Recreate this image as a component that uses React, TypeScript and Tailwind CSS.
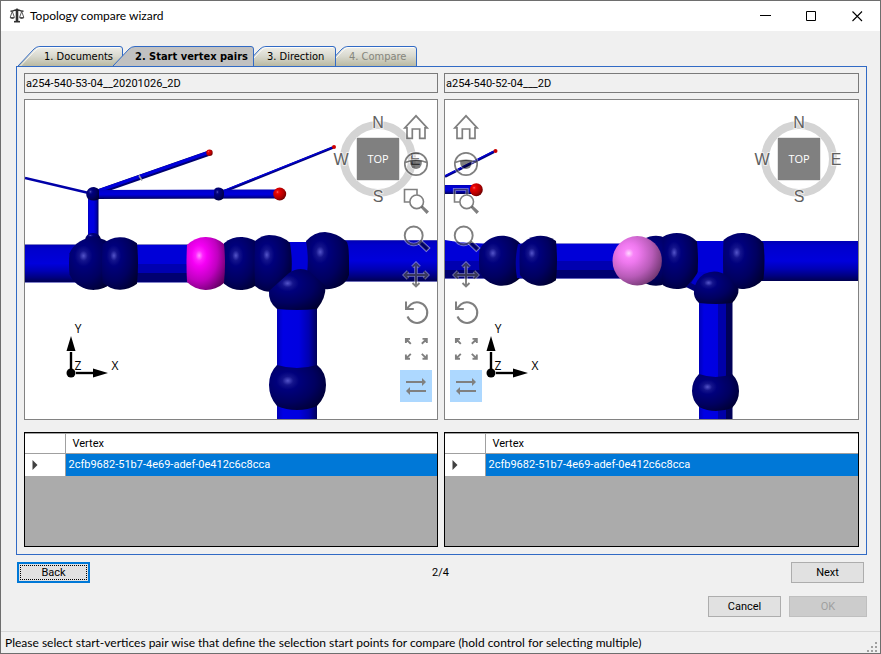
import React from "react";

const UI = "font-[Lato,'Open_Sans',sans-serif]";
const COMPACT = "font-[Roboto,'Liberation_Sans',sans-serif]";

/* ---------- Title bar ---------- */

function ScalesIcon() {
  return (
    <svg width="16" height="16" viewBox="0 0 16 16" aria-hidden="true" fill="none" stroke="#303030">
      <path d="M8 1.5v12" strokeWidth="2.6" />
      <path d="M5 13.7h6" strokeWidth="1.6" />
      <path d="M1.5 3.2Q4.5 3.2 6 2.2h4Q11.5 3.2 14.5 3.2" strokeWidth="1.4" />
      <path d="M3.3 3.5L1.3 9M3.3 3.5L5.3 9M12.7 3.5L10.7 9M12.7 3.5L14.7 9" strokeWidth=".8" />
      <path d="M.6 9h5.4Q5.5 11 3.3 11T.6 9zM10 9h5.4Q15 11 12.7 11T10 9z" fill="#505050" stroke="none" />
      <circle cx="8" cy="1.8" r="1.4" fill="#303030" stroke="none" />
    </svg>
  );
}

function TitleBar() {
  const control = "flex h-[30px] w-[46px] items-center justify-center";
  return (
    <header className="flex h-[30px] shrink-0 items-center bg-white pl-2">
      <ScalesIcon />
      <h1 className={`ml-[5px] flex-1 text-[12px] leading-4 ${UI}`}>Topology compare wizard</h1>
      <button aria-label="Minimize" className={control}>
        <svg width="11" height="11" viewBox="0 0 11 11"><path d="M0 4.5h11" stroke="#000" /></svg>
      </button>
      <button aria-label="Maximize" className={control}>
        <svg width="11" height="11" viewBox="0 0 11 11"><path d="M.5.5h9v9H.5z" fill="none" stroke="#000" /></svg>
      </button>
      <button aria-label="Close" className={control}>
        <svg width="11" height="11" viewBox="0 0 11 11"><path d="M.5.5l9.5 9.5M10 .5L.5 10" stroke="#000" strokeWidth="1.1" /></svg>
      </button>
    </header>
  );
}

/* ---------- Tabs ---------- */

type TabProps = { label: string; width: number; active?: boolean; disabled?: boolean; className: string };

function Tab({ label, width: w, active, disabled, className }: TabProps) {
  const edge = `M0 20L16 3Q18.5 .5 22 .5H${w - 3}Q${w - 0.5} .5 ${w - 0.5} 3V20`;
  return (
    <button
      role="tab"
      aria-selected={!!active}
      disabled={disabled}
      className={`relative h-5 shrink-0 whitespace-nowrap pt-0.5 text-left text-[11px] leading-[18px] font-['DejaVu_Sans_Condensed','DejaVu_Sans',sans-serif] ${className}`}
    >
      <svg className="absolute inset-0 h-full w-full" viewBox={`0 0 ${w} 20`} preserveAspectRatio="none" aria-hidden="true">
        <defs>
          <linearGradient id="tabFill" x2="0" y2="1">
            <stop offset="0" stopColor="#efefea" />
            <stop offset=".5" stopColor="#d8d8ce" />
            <stop offset="1" stopColor="#b9b9a2" />
          </linearGradient>
        </defs>
        <path d={edge} fill={active ? "#c1c1c1" : "url(#tabFill)"} stroke="#316ac5" />
        {!active && <path d={`M2.5 20L18 3.5Q20 1.5 22 1.5H${w - 3}`} fill="none" stroke="#fff" strokeOpacity=".8" />}
      </svg>
      <span className="relative">{label}</span>
    </button>
  );
}

function Tabs() {
  return (
    <div role="tablist" className="flex pl-0.5">
      <Tab label="1. Documents" width={105} className="z-10 w-[105px] pl-[26px]" />
      <Tab label="2. Start vertex pairs" width={141} active className="z-30 -ml-2.5 w-[141px] pl-[22px] font-bold" />
      <Tab label="3. Direction" width={92} className="z-20 -ml-2.5 w-[92px] pl-[23px]" />
      <Tab label="4. Compare" width={91} disabled className="z-10 -ml-2.5 w-[91px] pl-[23px] text-[#85857c]" />
    </div>
  );
}

/* ---------- Viewport overlays ---------- */

const TOOLS: { name: string; line: string; width: number; solid?: string }[] = [
  { name: "Home", width: 1.7, line: "M7 16.8H4.8L16 4.8L27.2 16.8H25V27.3H19.7V18H12.3V27.3H7Z" },
  {
    name: "Visibility",
    width: 1.7,
    line: "M16 4.8A11.2 11.2 0 1 1 16 27.2A11.2 11.2 0 1 1 16 4.8M5.2 14.5Q16 10 26.8 14.5",
    solid: "M10.2 13Q16 11 21.8 13V15A5.8 6 0 0 1 10.2 15Z",
  },
  {
    name: "Zoom window",
    width: 1.6,
    line: "M10 17H4.5V4.5H17V9.5M16.7 10A6.8 6.8 0 1 1 16.7 23.6A6.8 6.8 0 1 1 16.7 10",
    solid: "M20.8 22.8L22.8 20.8L29 26.5L26.6 29Z",
  },
  {
    name: "Zoom",
    width: 1.9,
    line: "M13.7 4.5A9 9 0 1 1 13.7 22.5A9 9 0 1 1 13.7 4.5",
    solid: "M18.6 21.8L21.6 18.8L29.5 26L26.3 29.2Z",
  },
  {
    name: "Pan",
    width: 1.9,
    line: "M16 4.5V27.5M4.5 16H27.5M12.5 8L16 4.5L19.5 8M12.5 24L16 27.5L19.5 24M8 12.5L4.5 16L8 19.5M24 12.5L27.5 16L24 19.5",
  },
  { name: "Rotate", width: 2, line: "M6.8 12.6L11 8.2A10.3 10.3 0 1 1 7.5 20.5M6 5.5V13H13.8" },
  {
    name: "Fit to view",
    width: 1.9,
    line: "M5.9 10V5.9H10M6 6L10.8 10.8M22.5 5.9H26.8V10M26.7 6L21.8 10.8M5.9 21.5V25.8H10M6 25.7L10.8 20.8M22.5 25.8H26.8V21.5M26.7 25.7L21.8 20.8",
  },
  {
    name: "Synchronize views",
    width: 2,
    line: "M6 12H23M26 21H9",
    solid: "M22 8L26 12L22 16ZM10 17L6 21L10 25Z",
  },
];

function Toolbar({ side }: { side: "left" | "right" }) {
  return (
    <div role="toolbar" className={`absolute top-[11px] flex flex-col gap-[5px] ${side === "left" ? "left-[5px]" : "right-[5px]"}`}>
      {TOOLS.map((t, i) => (
        <button key={t.name} aria-label={t.name} className={`h-8 w-8 ${i === TOOLS.length - 1 ? "bg-[#add8ff]" : ""}`}>
          <svg width="32" height="32" viewBox="0 0 32 32" fill="none">
            {i < 7 && <path d={t.line} stroke="#fff" strokeOpacity=".45" strokeWidth={t.width + 1.6} />}
            {i < 7 && t.solid && <path d={t.solid} stroke="#fff" strokeOpacity=".5" strokeWidth="1.5" />}
            <path d={t.line} stroke={i < 7 ? "#000" : "#808080"} strokeOpacity={i < 7 ? 0.5 : 1} strokeWidth={t.width} />
            {t.solid && <path d={t.solid} fill={i < 7 ? "#000" : "#808080"} fillOpacity={i < 7 ? 0.5 : 1} />}
          </svg>
        </button>
      ))}
    </div>
  );
}

function Compass() {
  return (
    <svg className="absolute top-[10px] right-[13px]" width="92" height="98" viewBox="0 0 92 98" textAnchor="middle">
      <circle cx="46" cy="49" r="34" fill="none" stroke="#d4d4d4" strokeWidth="8" />
      <rect x="24.5" y="27.5" width="43" height="43" fill="#808080" stroke="#e4e4e4" />
      <g fontFamily="Liberation Sans, Arial, sans-serif" fontSize="16" fill="#606060" stroke="#fff" strokeOpacity=".6" strokeWidth="2" paintOrder="stroke">
        <text x="46" y="18">N</text>
        <text x="9" y="55">W</text>
        <text x="83" y="55">E</text>
        <text x="46" y="92">S</text>
      </g>
      <text x="46" y="53" fontFamily="Open Sans, sans-serif" fontSize="11" fill="#fff">TOP</text>
    </svg>
  );
}

/* ---------- 3D scenes ---------- */

function Paints({ id }: { id: string }) {
  const balls: [string, string[]][] = [
    ["navy", ["#5454c8", "#14148c", "#00007c", "#000060", "#00002c"]],
    ["magenta", ["#ff90ff", "#ff20ff", "#f400f4", "#c000c0", "#5c005c"]],
    ["pink", ["#ffd8ff", "#f884f8", "#ee78ee", "#b85cb8", "#5c2c5c"]],
    ["red", ["#ff7070", "#f01010", "#e00000", "#b00000", "#500000"]],
  ];
  return (
    <defs>
      {balls.map(([name, c]) => (
        <radialGradient key={name} id={`${id}-${name}`} cx=".33" cy=".35" r=".8">
          <stop offset="0" stopColor={c[0]} />
          <stop offset=".12" stopColor={c[1]} />
          <stop offset=".25" stopColor={c[2]} />
          <stop offset=".6" stopColor={c[3]} />
          <stop offset="1" stopColor={c[4]} />
        </radialGradient>
      ))}
      <linearGradient id={`${id}-tube`} x2="0" y2="1">
        <stop offset="0" stopColor="#0000b4" />
        <stop offset=".12" stopColor="#0000cc" />
        <stop offset=".5" stopColor="#0000dc" />
        <stop offset=".7" stopColor="#0000b4" />
        <stop offset=".87" stopColor="#000080" />
        <stop offset="1" stopColor="#000050" />
      </linearGradient>
      <linearGradient id={`${id}-post`}>
        <stop offset="0" stopColor="#0000b8" />
        <stop offset=".15" stopColor="#0000e4" />
        <stop offset=".55" stopColor="#0000e0" />
        <stop offset=".8" stopColor="#0000b0" />
        <stop offset="1" stopColor="#000058" />
      </linearGradient>
    </defs>
  );
}

/** A sphere cut by vertical planes at `l` and `r`, where neighbouring solids meet it. */
function ball(cx: number, cy: number, rad: number, l: number, r: number) {
  const a = Math.sqrt(Math.max(0, rad * rad - (l - cx) ** 2));
  const b = Math.sqrt(Math.max(0, rad * rad - (r - cx) ** 2));
  return `M${l} ${cy - a}A${rad} ${rad} 0 0 1 ${r} ${cy - b}Q${r + 2} ${cy} ${r} ${cy + b}A${rad} ${rad} 0 0 1 ${l} ${cy + a}Q${l - 1} ${cy} ${l} ${cy - a}Z`;
}

function Axes({ x, y }: { x: number; y: number }) {
  return (
    <g transform={`translate(${x} ${y})`}>
      <path d="M0 0V-21M5 0H22" stroke="#a0a0a0" strokeWidth="3" />
      <path d="M0 0V-21M5 0H22" stroke="#000" strokeWidth="2" />
      <path d="M0 -37L4.5 -22H-4.5ZM37 0L22 4.5V-4.5Z" />
      <circle r="4.5" />
      <g fontFamily="Open Sans, sans-serif" fontSize="12" textAnchor="middle">
        <text x="7" y="-40">Y</text>
        <text x="44" y="-3">X</text>
        <text x="7" y="-3">Z</text>
      </g>
    </g>
  );
}

function LeftScene() {
  const u = (n: string) => `url(#a-${n})`;
  return (
    <svg className="absolute inset-0 h-full w-full" viewBox="25 100 412 319" preserveAspectRatio="xMidYMid slice" role="img" aria-label="3D view of a254-540-53-04__20201026_2D">
      <Paints id="a" />
      <path d="M25 178L93 194" stroke="#0000a8" strokeWidth="2.5" />
      <path d="M95 193L208 153.5" stroke="#000070" strokeWidth="5.5" />
      <path d="M95 192L207 153" stroke="#0000dc" strokeWidth="3" />
      <path d="M139 175.5l3 5" stroke="#a0a0a0" strokeWidth="1.5" />
      <path d="M220 193L333 147.5" stroke="#000080" strokeWidth="2.6" />
      <path d="M220 192L332 147.5" stroke="#0000dc" strokeWidth="1.2" />
      <circle cx="334" cy="147" r="2" fill="#d00000" />
      <circle cx="209.5" cy="152.7" r="3.2" fill={u("red")} />
      <path d="M93 190L280 189.5V198.5L93 199Z" fill={u("tube")} />
      <rect x="88" y="197" width="10.5" height="40" fill={u("post")} />
      <path d="M87 191Q89 187 94 187Q99 188 99 191V199Q94 202 88 199Q85 195 87 191Z" fill={u("navy")} />
      <path d={ball(218.5, 194, 6.5, 214.5, 223)} fill={u("navy")} />
      <circle cx="279.7" cy="194" r="6.5" fill={u("red")} />
      <rect x="25" y="244.5" width="165" height="38" fill={u("tube")} />
      <path d="M25 244.5H190M25 282.5H190" stroke="#8080c8" />
      <path d="M137 245H190V264H137Z" fill="#0000d8" />
      <path d="M137 264H190V273H137Z" fill="#0000b0" />
      <path d="M137 273H190V282H137Z" fill="#000070" />
      <rect x="286" y="242" width="30" height="35" fill="#0000d8" />
      <rect x="342" y="240" width="95" height="41.5" fill={u("tube")} />
      <path d="M342 240.5H437M342 281.5H437" stroke="#6060c0" strokeOpacity=".6" />
      <path d="M85 240Q86 233 93 233Q100 233 101 240Z" fill={u("navy")} />
      <path d={ball(93.5, 263.7, 26.2, 69.5, 112)} fill={u("navy")} />
      <path d={ball(120.5, 263.5, 26.2, 102.5, 137)} fill={u("navy")} />
      <path d={ball(241, 263.5, 26.5, 224, 260)} fill={u("navy")} />
      <path d={ball(206, 263.5, 26.5, 187, 224)} fill={u("magenta")} />
      <path d="M255 241Q262 235 269 235Q282 235 290 243Q293 262 291 276L280 290Q271 293 264 291Q258 289 255 286Q254 264 255 241Z" fill={u("navy")} />
      <path d="M306 241Q314 232 325 232Q337 233 346 241Q349 243 349 261V275Q347 281 343 284Q335 290 324 289L307 273Q309 258 306 241Z" fill={u("navy")} />
      <rect x="277" y="300" width="40" height="119" fill={u("post")} />
      <path d="M269 291L289 273Q299 266 309 271L325.5 286Q326 298 317 309Q297 311 277 309Q268 302 269 291Z" fill={u("navy")} />
      <path d="M277 365Q297 371 317 365Q326 372 326 385Q326 397 317 406Q308 410 297 410Q286 410 277 406Q269 397 269 385Q269 373 277 365Z" fill={u("navy")} />
      <Axes x={71} y={373} />
    </svg>
  );
}

function RightScene() {
  const u = (n: string) => `url(#b-${n})`;
  return (
    <svg className="absolute inset-0 h-full w-full" viewBox="445 100 413 319" preserveAspectRatio="xMidYMid slice" role="img" aria-label="3D view of a254-540-52-04___2D">
      <Paints id="b" />
      <path d="M445 176.5L494 151.7" stroke="#000080" strokeWidth="2.8" />
      <path d="M445 176L494 151" stroke="#0000dc" strokeWidth="1.3" />
      <circle cx="495.5" cy="151" r="2" fill="#c80000" />
      <rect x="445" y="185" width="29" height="9" fill={u("tube")} />
      <circle cx="476.3" cy="189.7" r="6.5" fill={u("red")} />
      <path d="M445 240Q460 242.5 483 243.5H640V278.5H445Z" fill="#0000d8" />
      <path d="M445 261H640V270H445Z" fill="#0000b0" />
      <path d="M445 270H640V278.5H445Z" fill="#000070" />
      <path d="M483 243.5H640M445 278.5H640" stroke="#8080c8" strokeOpacity=".6" />
      <rect x="694" y="241" width="36" height="34" fill="#0000d8" />
      <rect x="760" y="241" width="98" height="40" fill={u("tube")} />
      <path d={ball(502, 260.7, 25, 479.5, 520)} fill={u("navy")} />
      <path d="M518 244H523L521 261L523 278H517Q514 261 518 244Z" fill="#0000a8" />
      <path d={ball(540.5, 260.7, 25, 520, 556)} fill={u("navy")} />
      <path d={ball(656, 260.7, 25, 640, 678)} fill={u("navy")} />
      <path d={ball(677, 261, 28, 663, 697)} fill={u("navy")} />
      <circle cx="637.2" cy="260.7" r="24.7" fill={u("pink")} />
      <path d={ball(742, 261, 28, 723.5, 763.5)} fill={u("navy")} />
      <path d="M699 272L686 287L694 291L708 275Z" fill="#000078" />
      <path d="M698 272H707L697 286L691 283Z" fill="#0000cc" />
      <path d="M699 295H732V419H699Z" fill={u("post")} />
      <path d="M718 295H726V419H718Z" fill="#0000a8" />
      <path d="M726 295H732.5V419H726Z" fill="#000058" />
      <path d="M694 290Q696 279 704 274Q716 268 728 276L738.5 289Q739 296 732 303Q716 305 699 303Q693 298 694 290Z" fill={u("navy")} />
      <path d="M699 374Q716 380 732 374Q739 381 739 391Q739 401 732 408Q724 411 716 411Q707 411 699 407Q692 400 692 391Q692 381 699 374Z" fill={u("navy")} />
      <Axes x={491} y={373} />
    </svg>
  );
}

/* ---------- Document column ---------- */

function VertexGrid({ label }: { label: string }) {
  return (
    <div className="h-[115px] border border-black bg-[#ababab]">
      <table aria-label={label} className={`w-full table-fixed border-collapse text-left text-[11px] leading-4 ${COMPACT}`}>
        <thead>
          <tr className="h-5 border-y border-[#a0a0a0] bg-white">
            <th aria-label="Row selector" className="w-10 border-r border-[#a0a0a0] p-0" />
            <th className="p-0 pl-[7px] font-normal">Vertex</th>
          </tr>
        </thead>
        <tbody>
          <tr className="h-[22px] bg-[#0078d7] text-white">
            <td className="border-r border-[#a0a0a0] bg-white p-0 pl-[7px]">
              <svg width="6" height="10" viewBox="0 0 6 10" aria-hidden="true"><path d="M.5 0L5.5 5L.5 10Z" fill="#404040" /></svg>
            </td>
            <td className="p-0 pl-[3px]">2cfb9682-51b7-4e69-adef-0e412c6c8cca</td>
          </tr>
        </tbody>
      </table>
    </div>
  );
}

function DocumentColumn({ name, side, children }: { name: string; side: "left" | "right"; children: React.ReactNode }) {
  return (
    <section className="flex min-w-0 flex-col">
      <input
        readOnly
        aria-label="Document name"
        value={name}
        className={`h-5 w-full border border-[#7a7a7a] bg-[#f0f0f0] px-px text-[11px] leading-4 outline-none ${COMPACT}`}
      />
      <div className="relative mt-1.5 min-h-[321px] flex-1 overflow-hidden border border-[#828282] bg-white">
        {children}
        <Compass />
        <Toolbar side={side} />
      </div>
      <div className="mt-3">
        <VertexGrid label={`Start vertices of ${name}`} />
      </div>
    </section>
  );
}

/* ---------- Window ---------- */

const BUTTON = `h-[21px] border text-[11px] leading-4 ${COMPACT}`;

export default function App() {
  return (
    <div className="flex min-h-screen flex-col border border-[#6e6e6e] bg-[#f0f0f0] text-black">
      <TitleBar />
      <main className="flex flex-1 flex-col pt-[15px] pr-[13px] pl-[15px]">
        <Tabs />
        <div className="grid flex-1 grid-cols-[414fr_415fr] gap-1.5 border border-[#316ac5] px-[7px] pt-1.5 pb-[7px]">
          <DocumentColumn name="a254-540-53-04__20201026_2D" side="right"><LeftScene /></DocumentColumn>
          <DocumentColumn name="a254-540-52-04___2D" side="left"><RightScene /></DocumentColumn>
        </div>
        <nav className="mt-[7px] flex items-center justify-between pr-[3px] pl-px">
          <button className={`${BUTTON} w-[73px] border-2 border-[#0078d7] bg-[#e1e1e1] p-px`}>
            <span className="flex h-[15px] items-center justify-center border border-dotted border-black">Back</span>
          </button>
          <span className={`text-[11px] leading-4 ${COMPACT}`}>2/4</span>
          <button className={`${BUTTON} w-[73px] border-[#adadad] bg-[#e1e1e1]`}>Next</button>
        </nav>
        <div className="mt-[13px] flex justify-end gap-2">
          <button className={`${BUTTON} w-[73px] border-[#adadad] bg-[#e1e1e1]`}>Cancel</button>
          <button disabled className={`${BUTTON} w-[78px] border-[#bfbfbf] bg-[#cccccc] text-[#a0a0a0]`}>OK</button>
        </div>
      </main>
      <footer className="mt-[14px] flex h-[22px] items-center justify-between border-t border-[#d7d7d7] pr-0.5 pl-1">
        <p className={`text-[12px] leading-4 whitespace-nowrap ${UI}`}>
          Please select start-vertices pair wise that define the selection start points for compare (hold control for selecting multiple)
        </p>
        <svg width="11" height="11" viewBox="0 0 11 11" fill="#a0a0a0" className="shrink-0 self-end" aria-hidden="true">
          <path d="M8 0h2v2H8zM4 4h2v2H4zM8 4h2v2H8zM0 8h2v2H0zM4 8h2v2H4zM8 8h2v2H8z" />
        </svg>
      </footer>
    </div>
  );
}
